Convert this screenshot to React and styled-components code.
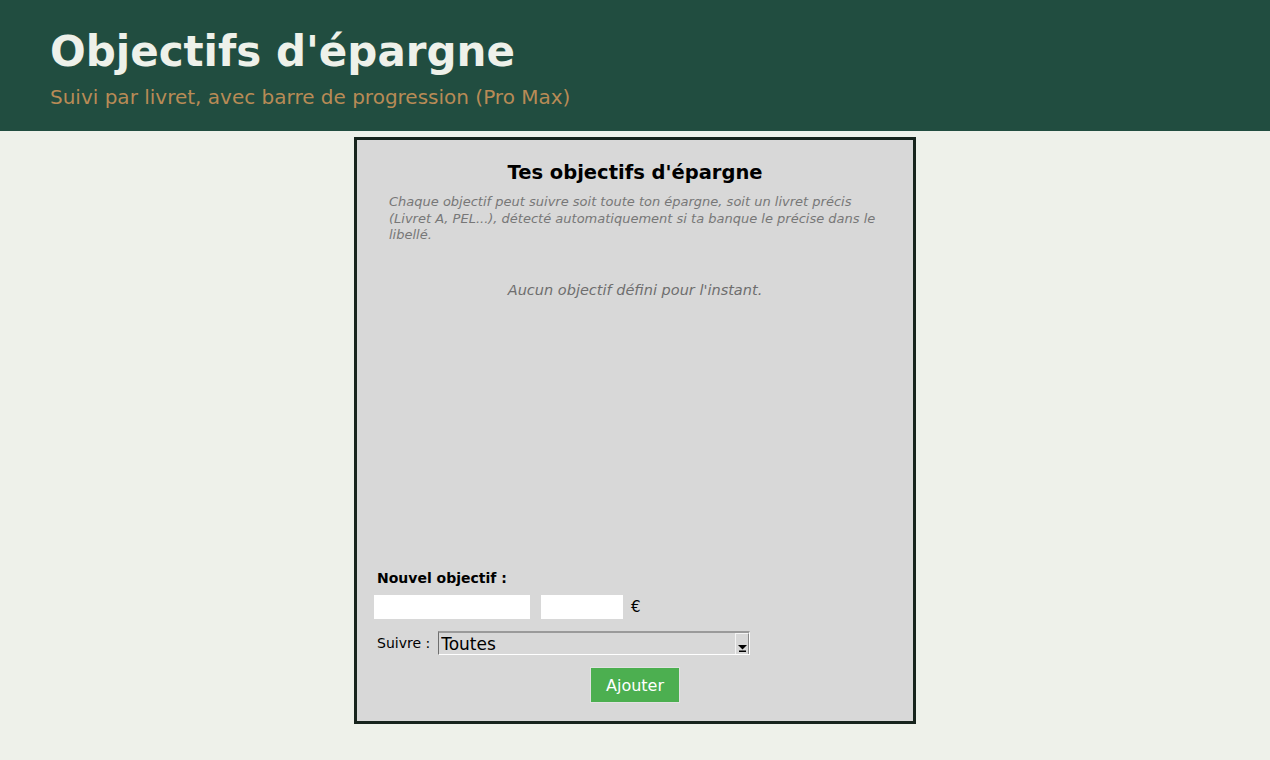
import React, { useState } from 'react';
import styled, { createGlobalStyle } from 'styled-components';

const GlobalStyle = createGlobalStyle`
  html, body {
    margin: 0;
    padding: 0;
    background: #eef1ea;
    font-family: "DejaVu Sans", Verdana, sans-serif;
  }
`;

const Header = styled.header`
  background: #214d40;
  height: 131px;
  padding: 26px 50px 0;
  box-sizing: border-box;
`;

const Title = styled.h1`
  margin: 0;
  color: #eef1ea;
  font-size: 42px;
  font-weight: bold;
  line-height: 52px;
`;

const Subtitle = styled.p`
  margin: 7px 0 0;
  color: #b88b56;
  font-size: 20px;
  line-height: 24px;
`;

const Main = styled.main`
  display: flex;
  justify-content: center;
  padding-top: 6px;
`;

const Panel = styled.section`
  width: 562px;
  height: 587px;
  box-sizing: border-box;
  border: 3px solid #17241d;
  background: #d8d8d8;
  display: flex;
  flex-direction: column;
  padding: 21px 20px 19px;
`;

const PanelTitle = styled.h2`
  margin: 0;
  text-align: center;
  font-size: 19.5px;
  font-weight: bold;
  color: #000;
  line-height: 24px;
`;

const Intro = styled.p`
  margin: 9px 12px 0;
  font-size: 13px;
  font-style: italic;
  color: #777;
  line-height: 16.5px;
`;

const Empty = styled.p`
  margin: 38px 0 0;
  text-align: center;
  font-size: 14.5px;
  line-height: 17px;
  font-style: italic;
  color: #6e6e6e;
`;

const Form = styled.form`
  margin-top: auto;
  display: flex;
  flex-direction: column;
`;

const FormLabel = styled.div`
  font-size: 14px;
  line-height: 17px;
  font-weight: bold;
  color: #000;
  margin-bottom: 8px;
`;

const Row = styled.div`
  display: flex;
  align-items: center;
  height: 24px;
  gap: ${p => p.gap || 11}px;
  margin-left: ${p => p.indent || 0}px;
  margin-bottom: ${p => p.mb || 0}px;
`;

const Input = styled.input`
  width: ${p => p.w}px;
  height: 24px;
  box-sizing: border-box;
  border: none;
  background: #fff;
  padding: 2px 4px;
  font-family: inherit;
  font-size: 13px;
  outline: none;
`;

const Unit = styled.span`
  font-size: 15px;
  color: #000;
  margin-left: -3px;
`;

const SmallLabel = styled.label`
  font-size: 14px;
  color: #000;
`;

const SelectBox = styled.div`
  display: flex;
  width: 312px;
  height: 24px;
  box-sizing: border-box;
  border-top: 2px solid #9a9a9a;
  border-left: 1px solid #6e6e6e;
  border-right: 1px solid #fff;
  border-bottom: 1px solid #fff;
  background: #d8d8d8;
`;

const Select = styled.select`
  flex: 1;
  appearance: none;
  -webkit-appearance: none;
  border: none;
  background: transparent;
  font-family: inherit;
  font-size: 17px;
  color: #000;
  padding: 0 2px;
  height: 100%;
  outline: none;
`;

const ArrowBtn = styled.span`
  width: 14px;
  box-sizing: border-box;
  border-left: 1px solid #f4f4f4;
  border-top: 1px solid #f4f4f4;
  border-right: 1px solid #888;
  display: flex;
  align-items: flex-end;
  justify-content: center;
  padding-bottom: 2px;
`;

const Button = styled.button`
  align-self: center;
  margin-top: 13px;
  width: 88px;
  height: 34px;
  border: none;
  outline: 1px solid #e2e2e2;
  background: #4caf50;
  color: #fff;
  font-family: inherit;
  font-size: 16px;
  cursor: pointer;
`;

const App = () => {
  const [name, setName] = useState('');
  const [amount, setAmount] = useState('');
  const [target, setTarget] = useState('all');

  return (
    <>
      <GlobalStyle />
      <Header>
        <Title>Objectifs d'épargne</Title>
        <Subtitle>Suivi par livret, avec barre de progression (Pro Max)</Subtitle>
      </Header>
      <Main>
        <Panel>
          <PanelTitle>Tes objectifs d'épargne</PanelTitle>
          <Intro>
            Chaque objectif peut suivre soit toute ton épargne, soit un livret précis
            (Livret A, PEL...), détecté automatiquement si ta banque le précise dans le
            libellé.
          </Intro>
          <Empty>Aucun objectif défini pour l'instant.</Empty>

          <Form onSubmit={e => e.preventDefault()}>
            <FormLabel>Nouvel objectif :</FormLabel>
            <Row gap={11} indent={-3} mb={12}>
              <Input w={156} value={name} onChange={e => setName(e.target.value)} />
              <Input w={82} value={amount} onChange={e => setAmount(e.target.value)} />
              <Unit>€</Unit>
            </Row>
            <Row gap={8}>
              <SmallLabel htmlFor="suivre">Suivre :</SmallLabel>
              <SelectBox>
                <Select id="suivre" value={target} onChange={e => setTarget(e.target.value)}>
                  <option value="all">Toutes</option>
                  <option value="livret-a">Livret A</option>
                  <option value="pel">PEL</option>
                </Select>
                <ArrowBtn>
                  <svg width="9" height="7" viewBox="0 0 9 7">
                    <path d="M0 0h9L4.5 4.5z" fill="#000" />
                    <rect x="1" y="5.5" width="7" height="1.5" fill="#000" />
                  </svg>
                </ArrowBtn>
              </SelectBox>
            </Row>
            <Button type="submit">Ajouter</Button>
          </Form>
        </Panel>
      </Main>
    </>
  );
};

export default App;
